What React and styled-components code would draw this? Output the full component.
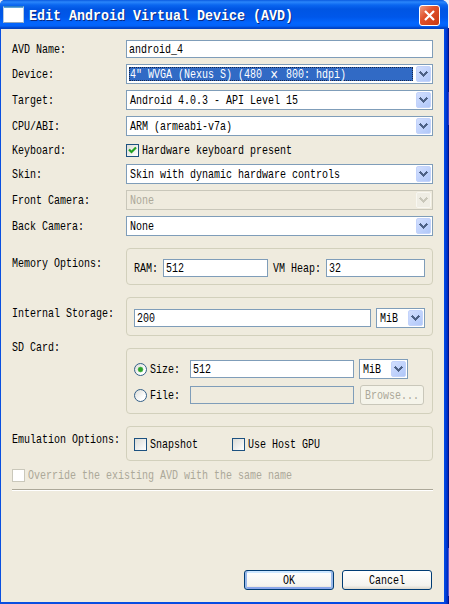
import React from 'react';
import styled, { createGlobalStyle, css } from 'styled-components';

const Global = createGlobalStyle`
  * { box-sizing: border-box; }
  html, body { margin: 0; padding: 0; overflow: hidden; }
  body { font: 10px/12px "Liberation Mono", monospace; color: #000; background: #17179c; }
`;

const Desktop = styled.div`
  width: 449px;
  height: 604px;
  padding-right: 1px;
  background: linear-gradient(#e9edf6 0 28px, #00138c 28px 92px, #3b40c8 92px 125px, #00138c 125px 548px, #5558d2 548px 596px, #00138c 596px);
`;

const Window = styled.div`
  width: 448px;
  height: 604px;
  display: flex;
  flex-direction: column;
  background: linear-gradient(90deg, #0a4fe0, #0148e4 445px, #0026b8);
  border-radius: 5px 7px 0 0;
  overflow: hidden;
`;

const TitleBar = styled.header`
  height: 29px;
  flex: none;
  display: flex;
  align-items: center;
  padding: 3px 7px 0 3px;
  background: linear-gradient(#0a5ae0 0, #2a86fb 2px, #0a66f0 5px, #0055e3 9px, #0057ea 17px, #0366fe 23px, #0262f8 26px, #0042c4 28px);
`;

const AppIcon = styled.span`
  width: 21px;
  height: 17px;
  margin-bottom: 3px;
  background: linear-gradient(#5fa4d8 0 1px, #fff 1px);
  border: 1px solid;
  border-color: #2d7fc4 #b4cbe0 #8fa5be #b4cbe0;
`;

const Title = styled.h1`
  margin: 0 auto 0 5px;
  font-size: 13.33px;
  line-height: 16px;
  font-weight: 700;
  white-space: pre;
  color: #fff;
  text-shadow: 1px 1px 0 #0a2a80;
  transform: translateY(1px) scaleY(1.12);
`;

const CloseButton = styled.button`
  width: 21px;
  height: 21px;
  margin: 0 1px 1px 0;
  padding: 0;
  display: grid;
  place-items: center;
  border: 1px solid #fff;
  border-radius: 3px;
  background: linear-gradient(135deg, #ee9a7e, #e0512c 40%, #c8380f);
`;

const Body = styled.main`
  flex: 1;
  margin: 0 4px 2px 1px;
  padding: 11px 11px 12px 11px;
  display: flex;
  flex-direction: column;
  background: #efebde;
`;

const Text = styled.span`
  display: inline-block;
  white-space: pre;
  transform: translateY(2px) scaleY(1.24);
`;

const WideGlyph = styled.span`
  display: inline-block;
  width: 12px;
  text-align: center;
  font-size: 13px;
  line-height: 8px;
  vertical-align: -1px;
`;

const Row = styled.div`
  display: flex;
  flex: none;
  height: ${(p) => p.$h}px;
  margin-bottom: ${(p) => p.$gap ?? 6}px;
`;

const Label = styled.div`
  width: 114px;
  flex: none;
  margin-top: ${(p) => p.$top ?? 4}px;
`;

const Field = styled.div`
  width: ${(p) => (p.$w ? `${p.$w}px` : 'auto')};
  flex: ${(p) => (p.$w ? 'none' : 1)};
  height: 18px;
  padding: 2px 2px;
  border: 1px solid #7f9db9;
  background: ${(p) => (p.$disabled ? '#efebde' : '#fff')};
`;

const ComboBox = styled.div`
  width: ${(p) => (p.$w ? `${p.$w}px` : 'auto')};
  flex: ${(p) => (p.$w ? 'none' : 1)};
  height: 20px;
  display: flex;
  align-items: center;
  padding: 1px;
  border: 1px solid ${(p) => (p.$disabled ? '#c9c7ba' : '#7f9db9')};
  background: ${(p) => (p.$disabled ? '#efebde' : '#fff')};
  color: ${(p) => (p.$disabled ? '#aca899' : '#000')};
`;

const ComboValue = styled.div`
  flex: 1;
  height: 14px;
  margin: 0 3px 0 1px;
  padding: 1px;
  border: 0 solid;
  ${(p) => p.$selected && css`
    padding: 0;
    border: 1px dotted #e8bd70;
    outline: 1px dotted #16284a;
    outline-offset: -1px;
    background: #316ac5;
    color: #fff;
  `}
`;

const ComboButton = styled.span`
  width: 15px;
  height: 16px;
  flex: none;
  display: grid;
  place-items: center;
  border-radius: 2px;
  border: 1px solid ${(p) => (p.$disabled ? '#f8f7f1' : '#c3d3fb')};
  background: ${(p) => (p.$disabled ? '#efede4' : 'linear-gradient(135deg, #d2defd, #c1d3fc 50%, #b0c7f8)')};
  color: ${(p) => (p.$disabled ? '#c9c7ba' : '#4d6185')};
`;

const Group = styled.div`
  flex: 1;
  display: flex;
  flex-direction: column;
  padding: ${(p) => p.$top}px 7px 0;
  border: 1px solid #d2d0bc;
  border-radius: 4px;
`;

const Line = styled.div`
  display: flex;
  align-items: center;
  height: 20px;
  margin-bottom: 6px;
`;

const Caption = styled.div`
  width: ${(p) => p.$w}px;
  padding-left: ${(p) => p.$pad ?? 0}px;
  flex: none;
`;

const Spacer = styled.span`
  width: ${(p) => p.$w}px;
  flex: none;
`;

const Option = styled.div`
  display: flex;
  align-items: center;
  gap: 3px;
  flex: none;
  width: ${(p) => (p.$w ? `${p.$w}px` : 'auto')};
  height: 16px;
  color: ${(p) => (p.$disabled ? '#aca899' : '#000')};
`;

const CheckBox = styled.span`
  width: 13px;
  height: 13px;
  flex: none;
  display: grid;
  place-items: center;
  border: 1px solid ${(p) => (p.$disabled ? '#cac8bb' : '#1c5180')};
  background: ${(p) => (p.$disabled ? '#fff' : 'linear-gradient(135deg, #dcdcd7, #fff)')};
`;

const Radio = styled.span`
  width: 13px;
  height: 13px;
  flex: none;
  border: 1px solid #335f88;
  border-radius: 50%;
  background: ${(p) => p.$on && 'radial-gradient(circle, #2ea12c 0 1.8px, #6cc36a 2.5px, transparent 3.2px),'} linear-gradient(135deg, #dcdcd7, #fff 70%);
`;

const Button = styled.button`
  width: ${(p) => p.$w}px;
  height: 20px;
  flex: none;
  padding: 0;
  font: inherit;
  color: #000;
  border: 1px solid #003c74;
  border-radius: 3px;
  background: linear-gradient(#fff, #f4f3ee 80%, #dcd8cd);
  ${(p) => p.$primary && css`
    box-shadow: inset 2px 0 #98b8ea, inset -2px 0 #98b8ea, inset 0 2px #cee7ff, inset 0 -2px #8aa6ea;
  `}
  &:disabled {
    border-color: #c9c7ba;
    background: #f5f4ea;
    color: #aca899;
  }
`;

const Divider = styled.hr`
  width: 421px;
  height: 2px;
  flex: none;
  margin: 6px 0 0;
  border: 0;
  border-top: 1px solid #aca899;
  border-bottom: 1px solid #fff;
`;

const Actions = styled.footer`
  margin-top: auto;
  padding-right: 1px;
  display: flex;
  justify-content: flex-end;
  gap: 8px;
`;

const Chevron = () => (
  <svg width="9" height="6" viewBox="0 0 9 6" shapeRendering="crispEdges">
    <path d="M0 1h1V0h1v1h1v1h1v1h1V2h1V1h1V0h1v1h1v1H8v1H7v1H6v1H5v1H4V5H3V4H2V3H1V2H0z" fill="currentColor" />
  </svg>
);

const Combo = ({ w, disabled, selected, children }) => (
  <ComboBox $w={w} $disabled={disabled}>
    <ComboValue $selected={selected}><Text>{children}</Text></ComboValue>
    <ComboButton $disabled={disabled}><Chevron /></ComboButton>
  </ComboBox>
);

const Input = ({ w, disabled, children }) => (
  <Field $w={w} $disabled={disabled}><Text>{children}</Text></Field>
);

const FormRow = ({ label, h = 20, gap, top, children }) => (
  <Row $h={h} $gap={gap}>
    <Label $top={top}><Text>{label}</Text></Label>
    {children}
  </Row>
);

export default function App() {
  return (
    <Desktop>
      <Global />
      <Window>
        <TitleBar>
          <AppIcon />
          <Title>Edit Android Virtual Device (AVD)</Title>
          <CloseButton aria-label="Close">
            <svg width="13" height="13" viewBox="0 0 13 13">
              <path d="M2 2l9 9M11 2l-9 9" stroke="#fff" strokeWidth="2.2" />
            </svg>
          </CloseButton>
        </TitleBar>
        <Body>
          <FormRow label="AVD Name:" h={18} top={3}><Input>android_4</Input></FormRow>
          <FormRow label="Device:">
            <Combo selected>4″ WVGA (Nexus S) (480 <WideGlyph>×</WideGlyph> 800: hdpi)</Combo>
          </FormRow>
          <FormRow label="Target:"><Combo>Android 4.0.3 - API Level 15</Combo></FormRow>
          <FormRow label="CPU/ABI:"><Combo>ARM (armeabi-v7a)</Combo></FormRow>
          <FormRow label="Keyboard:" h={16} top={2}>
            <Option>
              <CheckBox>
                <svg width="9" height="9" viewBox="0 0 9 9">
                  <path d="M1 3.5l2.5 2.5L8 1.5" fill="none" stroke="#21a121" strokeWidth="2.2" />
                </svg>
              </CheckBox>
              <Text>Hardware keyboard present</Text>
            </Option>
          </FormRow>
          <FormRow label="Skin:"><Combo>Skin with dynamic hardware controls</Combo></FormRow>
          <FormRow label="Front Camera:"><Combo disabled>None</Combo></FormRow>
          <FormRow label="Back Camera:" gap={12}><Combo>None</Combo></FormRow>

          <FormRow label="Memory Options:" h={37} gap={12} top={9}>
            <Group $top={9}>
              <Line>
                <Caption $w={29}><Text>RAM:</Text></Caption>
                <Input w={105}>512</Input>
                <Caption $w={58} $pad={5}><Text>VM Heap:</Text></Caption>
                <Input w={99}>32</Input>
              </Line>
            </Group>
          </FormRow>
          <FormRow label="Internal Storage:" h={39} gap={12} top={10}>
            <Group $top={10}>
              <Line>
                <Input w={237}>200</Input>
                <Spacer $w={5} />
                <Combo w={49}>MiB</Combo>
              </Line>
            </Group>
          </FormRow>
          <FormRow label="SD Card:" h={66} gap={12} top={-7}>
            <Group $top={10}>
              <Line>
                <Option $w={56}><Radio $on /><Text>Size:</Text></Option>
                <Input w={164}>512</Input>
                <Spacer $w={5} />
                <Combo w={49}>MiB</Combo>
              </Line>
              <Line>
                <Option $w={56}><Radio /><Text>File:</Text></Option>
                <Input w={164} disabled />
                <Spacer $w={6} />
                <Button $w={64} disabled><Text>Browse...</Text></Button>
              </Line>
            </Group>
          </FormRow>
          <FormRow label="Emulation Options:" h={35} top={7}>
            <Group $top={7}>
              <Line>
                <Option $w={98}><CheckBox /><Text>Snapshot</Text></Option>
                <Option><CheckBox /><Text>Use Host GPU</Text></Option>
              </Line>
            </Group>
          </FormRow>
          <Option $disabled>
            <CheckBox $disabled />
            <Text>Override the existing AVD with the same name</Text>
          </Option>
          <Divider />
          <Actions>
            <Button $w={90} $primary><Text>OK</Text></Button>
            <Button $w={90}><Text>Cancel</Text></Button>
          </Actions>
        </Body>
      </Window>
    </Desktop>
  );
}
